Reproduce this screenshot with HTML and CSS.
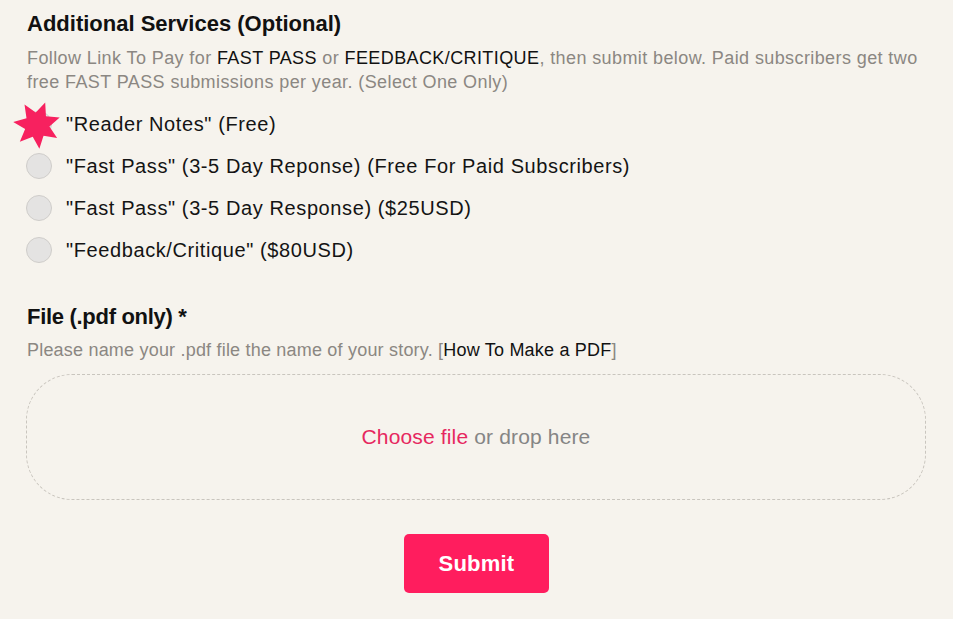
FILE: index.html
```html
<!DOCTYPE html>
<html>
<head>
<meta charset="utf-8">
<link rel="stylesheet" href="styles.css">
</head>
<body>
<form class="form">
  <section class="field">
    <h2 class="field-title">Additional Services (Optional)</h2>
    <p class="field-desc">Follow Link To Pay for <span class="dark">FAST PASS</span> or <span class="dark">FEEDBACK/CRITIQUE</span>, then submit below. Paid subscribers get two free FAST PASS submissions per year. (Select One Only)</p>
    <ul class="options">
      <li class="option">
        <span class="radio-wrap">
          <span class="radio"></span>
          <svg class="star" viewBox="0 0 48 48" width="50" height="50"><polygon fill="#f7215f" points="31.87,2.38 32.59,15.62 45.8,16.68 35.9,25.49 43.32,36.47 30.25,34.24 26.29,46.89 19.9,35.28 7.53,40.05 12.62,27.82 1.18,21.14 13.92,17.5 12.01,4.38 22.81,12.06"/></svg>
        </span>
        <span class="option-label">"Reader Notes" (Free)</span>
      </li>
      <li class="option">
        <span class="radio-wrap"><span class="radio"></span></span>
        <span class="option-label">"Fast Pass" (3-5 Day Reponse) (Free For Paid Subscribers)</span>
      </li>
      <li class="option">
        <span class="radio-wrap"><span class="radio"></span></span>
        <span class="option-label">"Fast Pass" (3-5 Day Response) ($25USD)</span>
      </li>
      <li class="option">
        <span class="radio-wrap"><span class="radio"></span></span>
        <span class="option-label">"Feedback/Critique" ($80USD)</span>
      </li>
    </ul>
  </section>
  <section class="field file-field">
    <h2 class="field-title file-title">File (.pdf only) *</h2>
    <p class="field-desc file-desc">Please name your .pdf file the name of your story. [<span class="dark">How To Make a PDF</span>]</p>
    <div class="dropzone"><span class="choose">Choose file</span>&nbsp;or drop here</div>
  </section>
  <div class="actions">
    <button type="button" class="submit">Submit</button>
  </div>
</form>
</body>
</html>
```
FILE: styles.css
```css
* { box-sizing: border-box; }
html, body { margin: 0; padding: 0; }
body {
  background: #f6f3ed;
  font-family: "Liberation Sans", Arial, sans-serif;
  color: #141414;
}
.form {
  padding: 12px 27px 0 27px;
  display: flex;
  flex-direction: column;
}
.field-title {
  margin: 0;
  font-size: 22px;
  line-height: 24px;
  font-weight: bold;
  color: #111;
}
.field-desc {
  margin: 10px 0 0 0;
  font-size: 18px;
  line-height: 24px;
  color: #8b8782;
  letter-spacing: 0.4px;
}
.dark { color: #111; }
.file-title { letter-spacing: -0.3px; }
.file-desc { letter-spacing: 0.2px; }
.options {
  list-style: none;
  margin: 9px 0 0 0;
  padding: 0;
}
.option {
  height: 42px;
  display: flex;
  align-items: center;
  gap: 14px;
}
.radio-wrap {
  position: relative;
  width: 26px;
  height: 26px;
  flex: none;
  margin-left: -1px;
}
.radio {
  display: block;
  width: 26px;
  height: 26px;
  border-radius: 50%;
  background: #e4e3e2;
  border: 1px solid #cfcdca;
}
.star {
  position: absolute;
  left: -14px;
  top: -11px;
}
.option-label {
  font-size: 20px;
  color: #141414;
  letter-spacing: 0.6px;
}
.file-field { margin-top: 34px; }
.file-field .field-desc { margin-top: 9px; }
.dropzone {
  margin-top: 12px;
  margin-left: -1px;
  height: 126px;
  border: 1px dashed #c9c5be;
  border-radius: 46px;
  display: flex;
  align-items: center;
  justify-content: center;
  font-size: 21px;
  color: #858585;
  letter-spacing: 0.15px;
}
.choose { color: #e6285f; }
.actions {
  display: flex;
  justify-content: center;
  margin-top: 34px;
}
.submit {
  width: 145px;
  height: 59px;
  border: none;
  border-radius: 5px;
  background: #ff1d5e;
  color: #fff;
  font-family: "Liberation Sans", Arial, sans-serif;
  font-weight: bold;
  font-size: 22px;
  letter-spacing: 0.2px;
  cursor: pointer;
}
```
